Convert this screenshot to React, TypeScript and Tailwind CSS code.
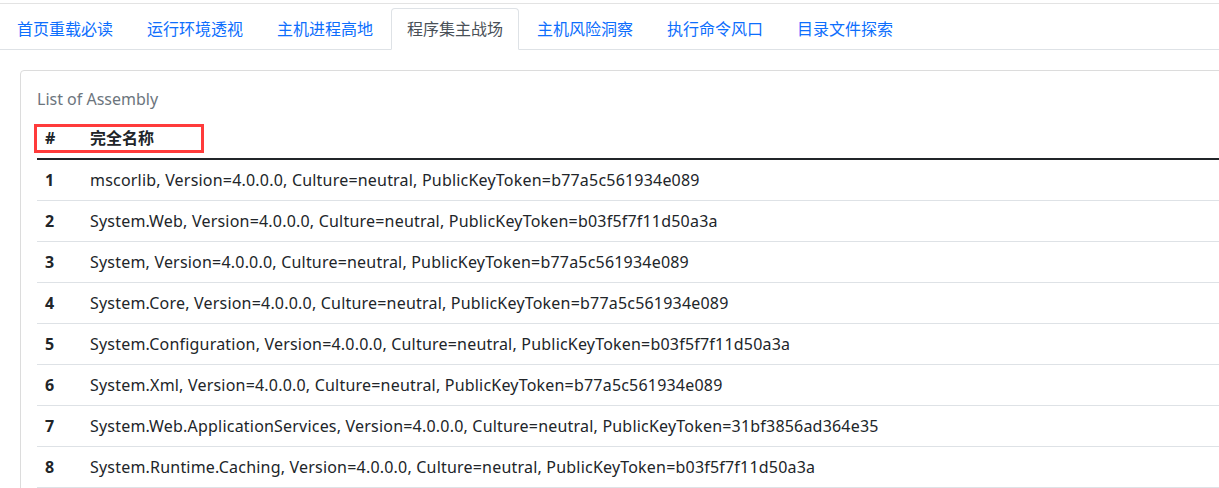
const tabs = [
    '首页重载必读',
    '运行环境透视',
    '主机进程高地',
    '程序集主战场',
    '主机风险洞察',
    '执行命令风口',
    '目录文件探索',
];

const assemblies = [
    'mscorlib, Version=4.0.0.0, Culture=neutral, PublicKeyToken=b77a5c561934e089',
    'System.Web, Version=4.0.0.0, Culture=neutral, PublicKeyToken=b03f5f7f11d50a3a',
    'System, Version=4.0.0.0, Culture=neutral, PublicKeyToken=b77a5c561934e089',
    'System.Core, Version=4.0.0.0, Culture=neutral, PublicKeyToken=b77a5c561934e089',
    'System.Configuration, Version=4.0.0.0, Culture=neutral, PublicKeyToken=b03f5f7f11d50a3a',
    'System.Xml, Version=4.0.0.0, Culture=neutral, PublicKeyToken=b77a5c561934e089',
    'System.Web.ApplicationServices, Version=4.0.0.0, Culture=neutral, PublicKeyToken=31bf3856ad364e35',
    'System.Runtime.Caching, Version=4.0.0.0, Culture=neutral, PublicKeyToken=b03f5f7f11d50a3a',
];

export default function App() {
    const active = 3;

    return (
        <div className="w-full h-[488px] overflow-hidden bg-white text-[16px] text-[#212529] font-['Segoe_UI','Noto_Sans','Noto_Sans_CJK_SC',sans-serif]">
            <div className="mt-[3px] border-t border-[#e3e3e3] pt-[4px]">
                <ul className="flex pl-[1px] border-b border-[#dee2e6]">
                    {tabs.map((t, i) => (
                        <li key={t} className="mr-[2px] -mb-px">
                            <a
                                href="#"
                                className={
                                    i === active
                                        ? 'block px-[15px] py-2 leading-6 border border-[#dee2e6] border-b-white rounded-t-[4px] bg-white text-[#495057]'
                                        : 'block px-[15px] py-2 leading-6 border border-transparent text-[#0d6efd]'
                                }
                            >
                                {t}
                            </a>
                        </li>
                    ))}
                </ul>
            </div>

            <div className="ml-5 mt-5 w-[1400px] border border-[#dcdcdc] rounded-[4px] p-4">
                <div className="leading-6 text-[#6c757d] mb-[7px]">List of Assembly</div>
                <div className="relative">
                    <table className="w-full table-fixed border-collapse">
                        <colgroup>
                            <col className="w-[45px]" />
                            <col />
                        </colgroup>
                        <thead>
                            <tr className="border-b-2 border-[#212529]">
                                <th className="px-2 py-2 leading-6 text-left font-bold">#</th>
                                <th className="px-2 py-2 leading-6 text-left font-bold">完全名称</th>
                            </tr>
                        </thead>
                        <tbody>
                            {assemblies.map((a, i) => (
                                <tr key={a} className="border-b border-[#dee2e6]">
                                    <td className="px-2 py-2 leading-6 font-bold">{i + 1}</td>
                                    <td className="px-2 py-2 leading-6 tracking-[0.2px] whitespace-nowrap">{a}</td>
                                </tr>
                            ))}
                        </tbody>
                    </table>
                    <div className="absolute left-[-3px] top-[6px] w-[170px] h-[29px] border-[3px] border-[#ff3b3b] pointer-events-none" />
                </div>
            </div>
        </div>
    );
}
